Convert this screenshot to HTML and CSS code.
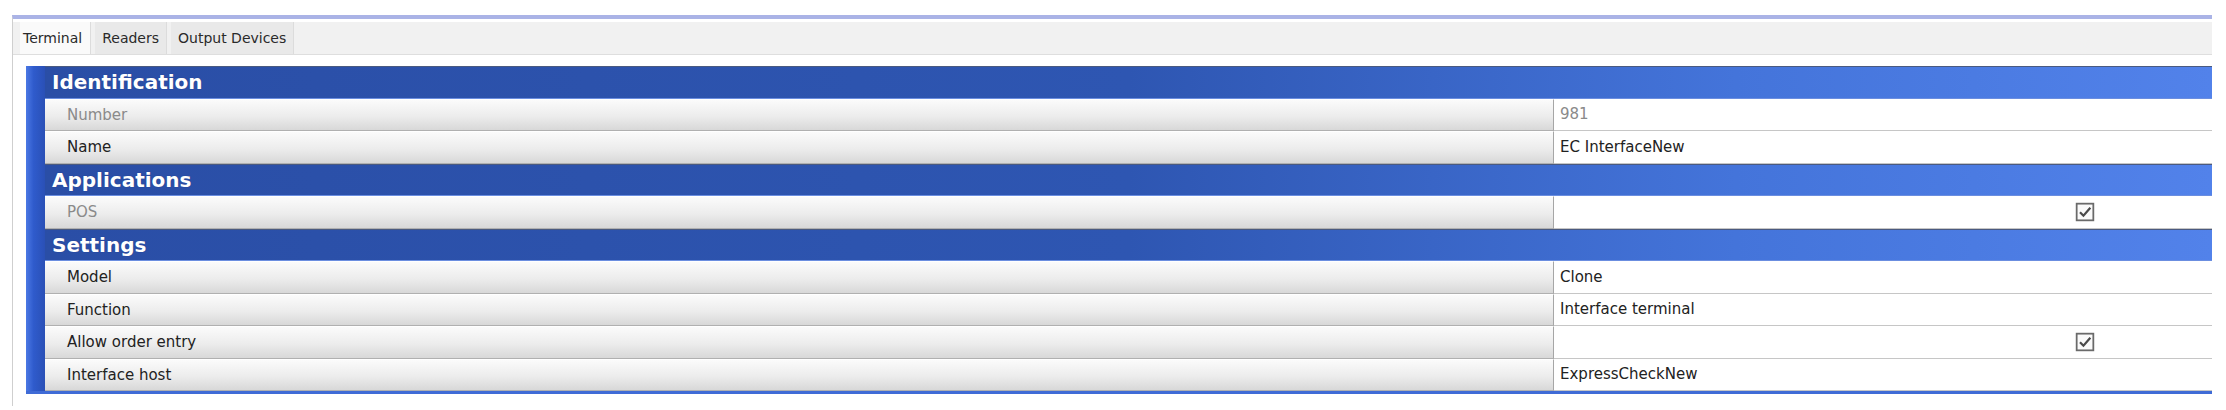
FILE: index.html
```html
<!DOCTYPE html>
<html lang="en">
<head>
  <meta charset="UTF-8">
  <title>Terminal properties</title>
  <link rel="stylesheet" href="styles.css">
</head>
<body>

  <div class="frame">
    <div class="tabs">
      <span class="tab active">Terminal</span>
      <span class="tab">Readers</span>
      <span class="tab">Output Devices</span>
    </div>

    <div class="panel">
      <div class="stripe"></div>
      <div class="props">
        <div class="section">Identification</div>
        <div class="label disabled">Number</div>
        <div class="value disabled">981</div>
        <div class="label">Name</div>
        <div class="value">EC InterfaceNew</div>

        <div class="section">Applications</div>
        <div class="label disabled">POS</div>
        <div class="value"><svg class="check" viewBox="0 0 18 18"><rect x="1.5" y="1.5" width="15" height="15" fill="#fafafa" stroke="#6a6a6a" stroke-width="1.6"/><path d="M4.5 9.2 L7.6 12.3 L13.8 5.2" fill="none" stroke="#4a4a4a" stroke-width="2"/></svg></div>

        <div class="section">Settings</div>
        <div class="label">Model</div>
        <div class="value">Clone</div>
        <div class="label">Function</div>
        <div class="value">Interface terminal</div>
        <div class="label">Allow order entry</div>
        <div class="value"><svg class="check" viewBox="0 0 18 18"><rect x="1.5" y="1.5" width="15" height="15" fill="#fafafa" stroke="#6a6a6a" stroke-width="1.6"/><path d="M4.5 9.2 L7.6 12.3 L13.8 5.2" fill="none" stroke="#4a4a4a" stroke-width="2"/></svg></div>
        <div class="label">Interface host</div>
        <div class="value">ExpressCheckNew</div>
      </div>
    </div>
  </div>

</body>
</html>
```

FILE: styles.css
```css
body {
  margin: 0;
  background: #fff;
  font-family: "DejaVu Sans", sans-serif;
  color: #222;
}
.frame {
  margin: 15px 14px 0 12px;
  border-top: 4px solid #aab3e6;
  border-left: 1px solid #cfcfcf;
  padding-bottom: 12px;
}
.tabs {
  display: flex;
  align-items: stretch;
  height: 32px;
  margin-top: 3px;
  padding-left: 7px;
  background: #f1f1f1;
  border-bottom: 1px solid #dedede;
}
.tab {
  display: flex;
  align-items: center;
  padding: 0 7px;
  margin-right: 4px;
  font-size: 14px;
  color: #2a2a2a;
  background: #e9e9e9;
  border-right: 1px solid #dcdcdc;
}
.tab.active {
  background: #fafafa;
  padding: 0 8px 0 3px;
}
.panel {
  display: flex;
  margin: 11px 0 0 13px;
  border-bottom: 3px solid #3f6bd6;
}
.stripe {
  width: 19px;
  background: linear-gradient(90deg, #4b78e4, #2f5bcc 40%, #2a50b6);
}
.props {
  flex: 1;
  display: grid;
  grid-template-columns: 1fr 658px;
  grid-auto-rows: 32.5px;
}
.section {
  grid-column: 1 / -1;
  display: flex;
  align-items: center;
  padding-left: 7px;
  font-size: 20px;
  font-weight: bold;
  color: #fff;
  text-shadow: 0 0 1px #1c3580;
  background: linear-gradient(90deg, #2a4ea6, #2e56b2 50%, #4474da 78%, #5282ea);
  border-top: 1px solid #4a5a80;
  border-bottom: 1px solid #6b8ee0;
}
.label {
  display: flex;
  align-items: center;
  padding-left: 22px;
  font-size: 15px;
  background: linear-gradient(#fbfbfb, #ececec 55%, #d8d8d8);
  border-top: 1px solid #fff;
  border-bottom: 1px solid #b0b0b0;
  border-right: 1px solid #a6a6a6;
}
.value {
  display: flex;
  align-items: center;
  padding-left: 6px;
  font-size: 15px;
  background: #fff;
  border-bottom: 1px solid #c6c6c6;
}
.disabled {
  color: #8a8a8a;
}
.check {
  width: 20px;
  height: 20px;
  margin-left: 515px;
}
```
